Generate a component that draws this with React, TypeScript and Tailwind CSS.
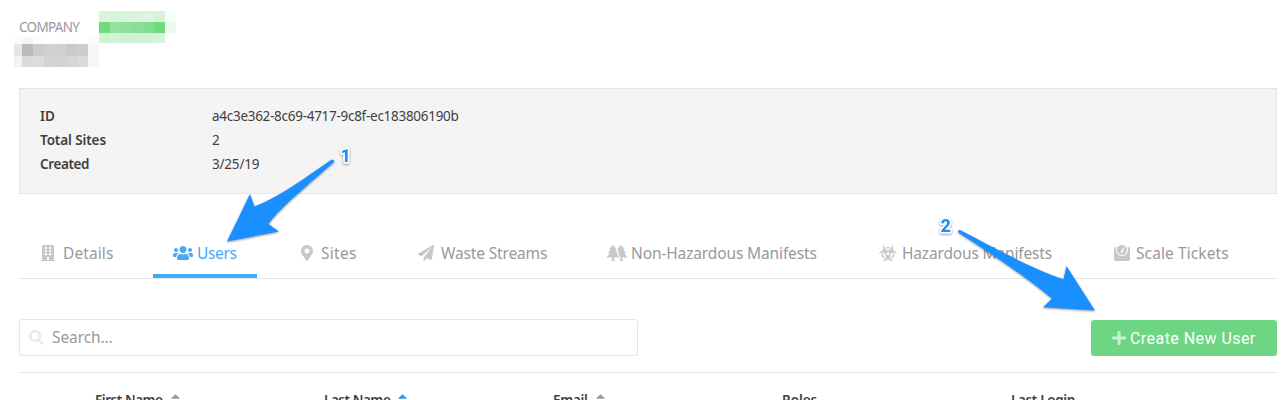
import React from "react";
import { FaBiohazard, FaBuilding, FaMapMarkerAlt, FaPaperPlane, FaPlus, FaSearch, FaUsers, FaWeight } from "react-icons/fa";

const Trees = ({ className = "" }: { className?: string }) => (
  <svg viewBox="0 0 20 16" fill="currentColor" className={className}>
    <path d="M6 0 2 4.3h1.7L1.2 7.8h1.6L.1 11.600c-.3.5 0 1 .6 1h4.400v1.400l-1 2h3.800l-1-2v-1.400h4.400c.6 0 .9-.5.6-1L9.200 7.800h1.600L8.300 4.300H10z" />
    <path d="M14 0 10.600 3.700 11.300 4.800 10.500 5 12.500 8.300l-1.500.2 2 3c.3.600.2 1.100-.2 1.500h.6V14l-1 2h3.800l-1-2v-1.400h4.100c.6 0 .9-.5.6-1L17.200 7.800h1.600L16.300 4.300H18z" />
  </svg>
);

const facts = [
  { name: "ID", value: "a4c3e362-8c69-4717-9c8f-ec183806190b", nameClass: "", valueClass: "tracking-[-0.28px]" },
  { name: "Total Sites", value: "2", nameClass: "tracking-[-0.1px]", valueClass: "" },
  { name: "Created", value: "3/25/19", nameClass: "tracking-[-0.4px]", valueClass: "tracking-[-0.2px]" },
];

const tabs = [
  { label: "Details", icon: <FaBuilding className="h-4 w-[14px]" />, box: "ml-[2px] w-[112px]", text: "ml-[8px] tracking-[0.1px]" },
  { label: "Users", icon: <FaUsers className="h-4 w-5" />, box: "ml-5 w-[104px]", text: "ml-[4px] tracking-[-0.35px]", active: true },
  { label: "Sites", icon: <FaMapMarkerAlt className="h-4 w-3" />, box: "ml-6 w-[96px]", text: "ml-[8px] tracking-[0.3px]" },
  { label: "Waste Streams", icon: <FaPaperPlane className="h-4 w-4" />, box: "ml-[21px] w-[168px]", text: "ml-[7px] tracking-[-0.15px]" },
  { label: "Non-Hazardous Manifests", icon: <Trees className="h-4 w-5" />, box: "ml-[21px] w-[250px]", text: "ml-[4px] tracking-[-0.13px]" },
  { label: "Hazardous Manifests", icon: <FaBiohazard className="h-4 w-[18px]" />, box: "ml-[22px] w-[213px]", text: "ml-[5px] tracking-[-0.16px]" },
  { label: "Scale Tickets", icon: <FaWeight className="h-4 w-4" />, box: "ml-[22px] w-[155px]", text: "ml-[6px] tracking-[0.1px]" },
];

const columns = [
  { label: "First Name", sort: "text-[#999]", text: "tracking-[-0.45px]" },
  { label: "Last Name", sort: "text-[#3d94e0]", text: "tracking-[-0.45px]" },
  { label: "Email", sort: "text-[#999]", text: "tracking-[-0.3px]" },
  { label: "Roles", sort: "", text: "tracking-[-0.05px]" },
  { label: "Last Login", sort: "", text: "tracking-[-0.35px]" },
];

const greenCells = [
  "bg-[#d9f5dd]", "bg-[#d6f4da]", "bg-[#d6f4da]", "bg-[#d8f4dc]", "bg-[#dbf6df]", "bg-[#d7f4db]", "bg-[#fafefb]",
  "bg-[#70da7e]", "bg-[#91e29d]", "bg-[#8fe09b]", "bg-[#88df95]", "bg-[#83dd90]", "bg-[#70da7e]", "bg-[#ebfaed]",
  "bg-[#cff1d4]", "bg-[#d3f3d7]", "bg-[#d0f1d5]", "bg-[#cef1d4]", "bg-[#d2f2d7]", "bg-[#d4f3d8]", "bg-[#fcfffc]",
];

const grayCells = [
  "bg-[#fafafa]", "bg-[#f5f5f5]", "bg-[#fdfdfd]", "bg-white", "bg-[#fdfdfd]", "bg-[#fdfdfd]", "bg-white", "bg-[#f8fdf9]",
  "bg-[#e6e6e6]", "bg-[#bbbbbb]", "bg-[#cccccc]", "bg-[#d0d0d0]", "bg-[#d1d1d1]", "bg-[#cacaca]", "bg-[#cdcdcd]", "bg-[#f7f7f7]",
  "bg-[#f2f2f2]", "bg-[#dadada]", "bg-[#dcdcdc]", "bg-[#d4d4d4]", "bg-[#d2d2d2]", "bg-[#d5d5d5]", "bg-[#dadada]", "bg-[#f7f7f7]",
];

function Annotations() {
  return (
    <svg className="pointer-events-none absolute left-0 top-0 h-[400px] w-[1288px] [filter:drop-shadow(0_1.5px_1px_rgba(0,0,0,.4))]" viewBox="0 0 1288 400">
      <g fill="#1a8fff">
        <path d="M331 159.900C306 177 281 196 254.500 206.500L250 194 227 241.500 279 231.500 268.500 224C281 207 309 184 333.500 162.500C335 160.500 333 159 331 159.900Z" />
        <path d="M960.500 230.200C995 248 1034 270 1063.500 279.300L1066.500 266 1095 310.500 1043 307.300 1052 298.500C1025 276 990 253 959 233C957.200 231.500 958.500 229.400 960.500 230.200Z" />
      </g>
      <g fontFamily="Roboto, sans-serif" fontWeight="800" fontSize="18" fill="#1a8fff" stroke="#fff" strokeWidth="3.500" strokeLinejoin="round" paintOrder="stroke">
        <text x="340.500" y="162">1</text>
        <text x="940.500" y="232">2</text>
      </g>
    </svg>
  );
}

export default function App() {
  return (
    <div className="relative h-[400px] w-[1288px] overflow-hidden bg-white pl-[19px] pr-[11px] font-['Noto_Sans',sans-serif] text-[#3f3f3f]">
      <header className="h-[88px]">
        <div className="flex h-[37px] pt-[11px]">
          <span className="w-20 whitespace-nowrap pt-[6px] text-[13.5px] leading-5 tracking-[-0.7px] text-[#999]">COMPANY</span>
          <div className="grid h-8 grid-cols-[repeat(7,11px)] grid-rows-[11px_11px_10px]">
            {greenCells.map((c, i) => <i key={i} className={c} />)}
          </div>
        </div>
        <div className="-ml-[5px] grid w-[85px] grid-cols-[8px_repeat(7,11px)] grid-rows-[7px_12px_11px]">
          {grayCells.map((c, i) => <i key={i} className={c} />)}
        </div>
      </header>

      <dl className="h-[106px] border border-[#e5e5e5] bg-[#f4f4f4] pl-5 pt-[15px] text-[13.5px] leading-6">
        {facts.map((f) => (
          <div key={f.name} className="flex">
            <dt className={`w-[172px] font-semibold ${f.nameClass}`}>{f.name}</dt>
            <dd className={f.valueClass}>{f.value}</dd>
          </div>
        ))}
      </dl>

      <nav className="mt-[34px] flex h-[51px] border-b border-[#e5e5e5] text-[15.5px] text-[#999]">
        {tabs.map((t) => (
          <a key={t.label} className={`flex h-[50px] shrink-0 items-start whitespace-nowrap border-b-4 px-5 pt-[17px] ${t.box} ${t.active ? "border-[#42aaf8] text-[#42aaf8]" : "border-transparent"}`}>
            <span className={`shrink-0 ${t.active ? "" : "text-[#c8c8c8]"}`}>{t.icon}</span>
            <span className={`-mt-1 leading-6 ${t.text}`}>{t.label}</span>
          </a>
        ))}
      </nav>

      <div className="mt-10 flex justify-between">
        <label className="flex h-[37px] w-[619px] items-center rounded-[3px] border border-[#e5e5e5] pl-[9px]">
          <FaSearch className="size-[15px] text-[#e9e9e9]" />
          <span className="-mt-px ml-2 text-[15.5px] leading-6 tracking-[-0.1px] text-[#999]">Search...</span>
        </label>
        <button className="mt-px flex h-9 w-[186px] items-center rounded-[3px] bg-[#6dd584] pl-5 font-[Roboto,sans-serif] text-base tracking-[0.45px] text-white">
          <FaPlus className="size-4 text-[#c9f0d2]" />
          <span className="ml-[3px] mt-px whitespace-nowrap">Create New User</span>
        </button>
      </div>

      <div className="mt-4 flex h-[28px] overflow-hidden border-t border-[#e5e5e5] pl-[76px] text-[13.5px] font-semibold">
        {columns.map((c) => (
          <div key={c.label} className="flex w-[229px] shrink-0 pt-[17px] leading-5">
            <span className={c.text}>{c.label}</span>
            {c.sort && (
              <svg className={`ml-[8px] mt-[4px] h-[5px] w-[9px] ${c.sort}`} viewBox="0 0 10 5" fill="currentColor">
                <path d="M5 0 9.500 4.300Q9.800 5 9 5H1Q.2 5 .5 4.300Z" />
              </svg>
            )}
          </div>
        ))}
      </div>
      <Annotations />
    </div>
  );
}
